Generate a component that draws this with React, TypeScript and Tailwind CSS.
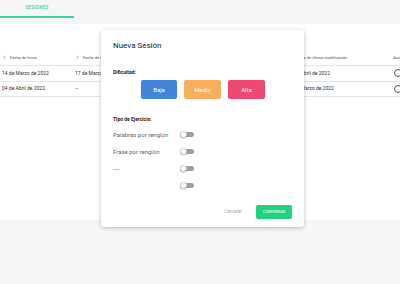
import React from 'react'
import { ArrowUp } from 'lucide-react'

const columns = [
  { label: 'Fecha de Inicio', w: 'w-[73px]' },
  { label: 'Fecha de fin', w: 'w-[212px]' },
  { label: 'Fecha de última modificación', w: 'w-[106px]' },
]

const rows = [
  ['14 de Marzo de 2022', '17 de Marzo de 2022', '04 de Abril de 2022'],
  ['04 de Abril de 2022', '–', '17 de Marzo de 2022'],
]

const tipos = ['Palabras por renglón', 'Frase por renglón', '----', '']

function Toggle() {
  return (
    <div className="relative flex h-[7px] w-[14px] items-center">
      <div className="h-[5px] w-[14px] rounded-full bg-[#9e9e9e]" />
      <div className="absolute left-0 top-0 h-[7px] w-[7px] rounded-full border border-[#d5d5d5] bg-white shadow-[0_0.5px_1px_rgba(0,0,0,0.3)]" />
    </div>
  )
}

export default function App() {
  return (
    <div className="relative h-[284px] w-[400px] overflow-hidden bg-white font-['Roboto',sans-serif]">
      {/* tabs */}
      <div className="h-[24px] bg-[#f6f6f6]">
        <div className="flex h-[18px] w-[74px] items-center justify-center border-b-2 border-b-[#3ad49c] pt-[1px] text-[4.5px] font-medium tracking-[0.3px] text-[#3ad49c]">
          SESIONES
        </div>
      </div>

      {/* table */}
      <div className="h-[196px] bg-white pt-[26px]">
        <div className="flex h-[16px] items-center border-b border-[#e6e6e6] text-[4px] text-[#555]">
          {columns.map((c) => (
            <div key={c.label} className={`${c.w} flex shrink-0 items-center gap-[3px] pl-[2px] whitespace-nowrap`}>
              <ArrowUp className="h-[5px] w-[5px] text-[#999]" strokeWidth={2} />
              {c.label}
            </div>
          ))}
          <div className="pl-[2px] whitespace-nowrap">Acciones</div>
        </div>
        {rows.map((r, i) => (
          <div key={i} className="flex h-[15.5px] items-center border-b border-[#e6e6e6] text-[5px] text-[#333]">
            {r.map((cell, j) => (
              <div key={j} className={`${columns[j].w} shrink-0 pl-[2px] whitespace-nowrap`}>
                {cell}
              </div>
            ))}
            <div className="pl-[3px]">
              <div className="h-[8px] w-[8px] rounded-full border border-[#555]" />
            </div>
          </div>
        ))}
      </div>

      <div className="h-[64px] bg-[#f7f7f7]" />

      {/* modal */}
      <div className="absolute left-[101px] top-[30px] flex h-[197px] w-[203px] flex-col rounded-[3px] bg-white px-[12px] pt-[11px] shadow-[0_1px_4px_rgba(0,0,0,0.25)]">
        <div className="text-[8px] leading-[9px] text-[#222]">Nueva Sesión</div>

        <div className="mt-[19px] text-[5px] font-bold leading-[6px] text-[#222]">Dificultad:</div>
        <div className="ml-[28px] mt-[5px] flex gap-[7px]">
          <div className="flex h-[19px] w-[36px] items-center justify-center rounded-[2px] bg-[#4186d8] text-[6px] text-white">Baja</div>
          <div className="flex h-[19px] w-[37px] items-center justify-center rounded-[2px] bg-[#f9ae5e] text-[6px] text-white">Media</div>
          <div className="flex h-[19px] w-[37px] items-center justify-center rounded-[2px] bg-[#f14871] text-[6px] text-white">Alta</div>
        </div>

        <div className="mt-[17px] text-[5px] font-bold leading-[6px] text-[#222]">Tipo de Ejercicio:</div>
        <div className="mt-[4px] flex flex-col">
          {tipos.map((t, i) => (
            <div key={i} className="flex h-[17px] items-center">
              <div className="w-[67px] whitespace-nowrap text-[6px] text-[#666]">{t}</div>
              <Toggle />
            </div>
          ))}
        </div>

        <div className="mt-auto mb-[8px] flex items-center justify-end gap-[14px]">
          <div className="text-[4.5px] text-[#aaa]">Cancelar</div>
          <div className="flex h-[14px] w-[36px] items-center justify-center rounded-[2px] bg-[#20d27d] text-[4px] text-white">
            CONFIRMAR
          </div>
        </div>
      </div>
    </div>
  )
}
